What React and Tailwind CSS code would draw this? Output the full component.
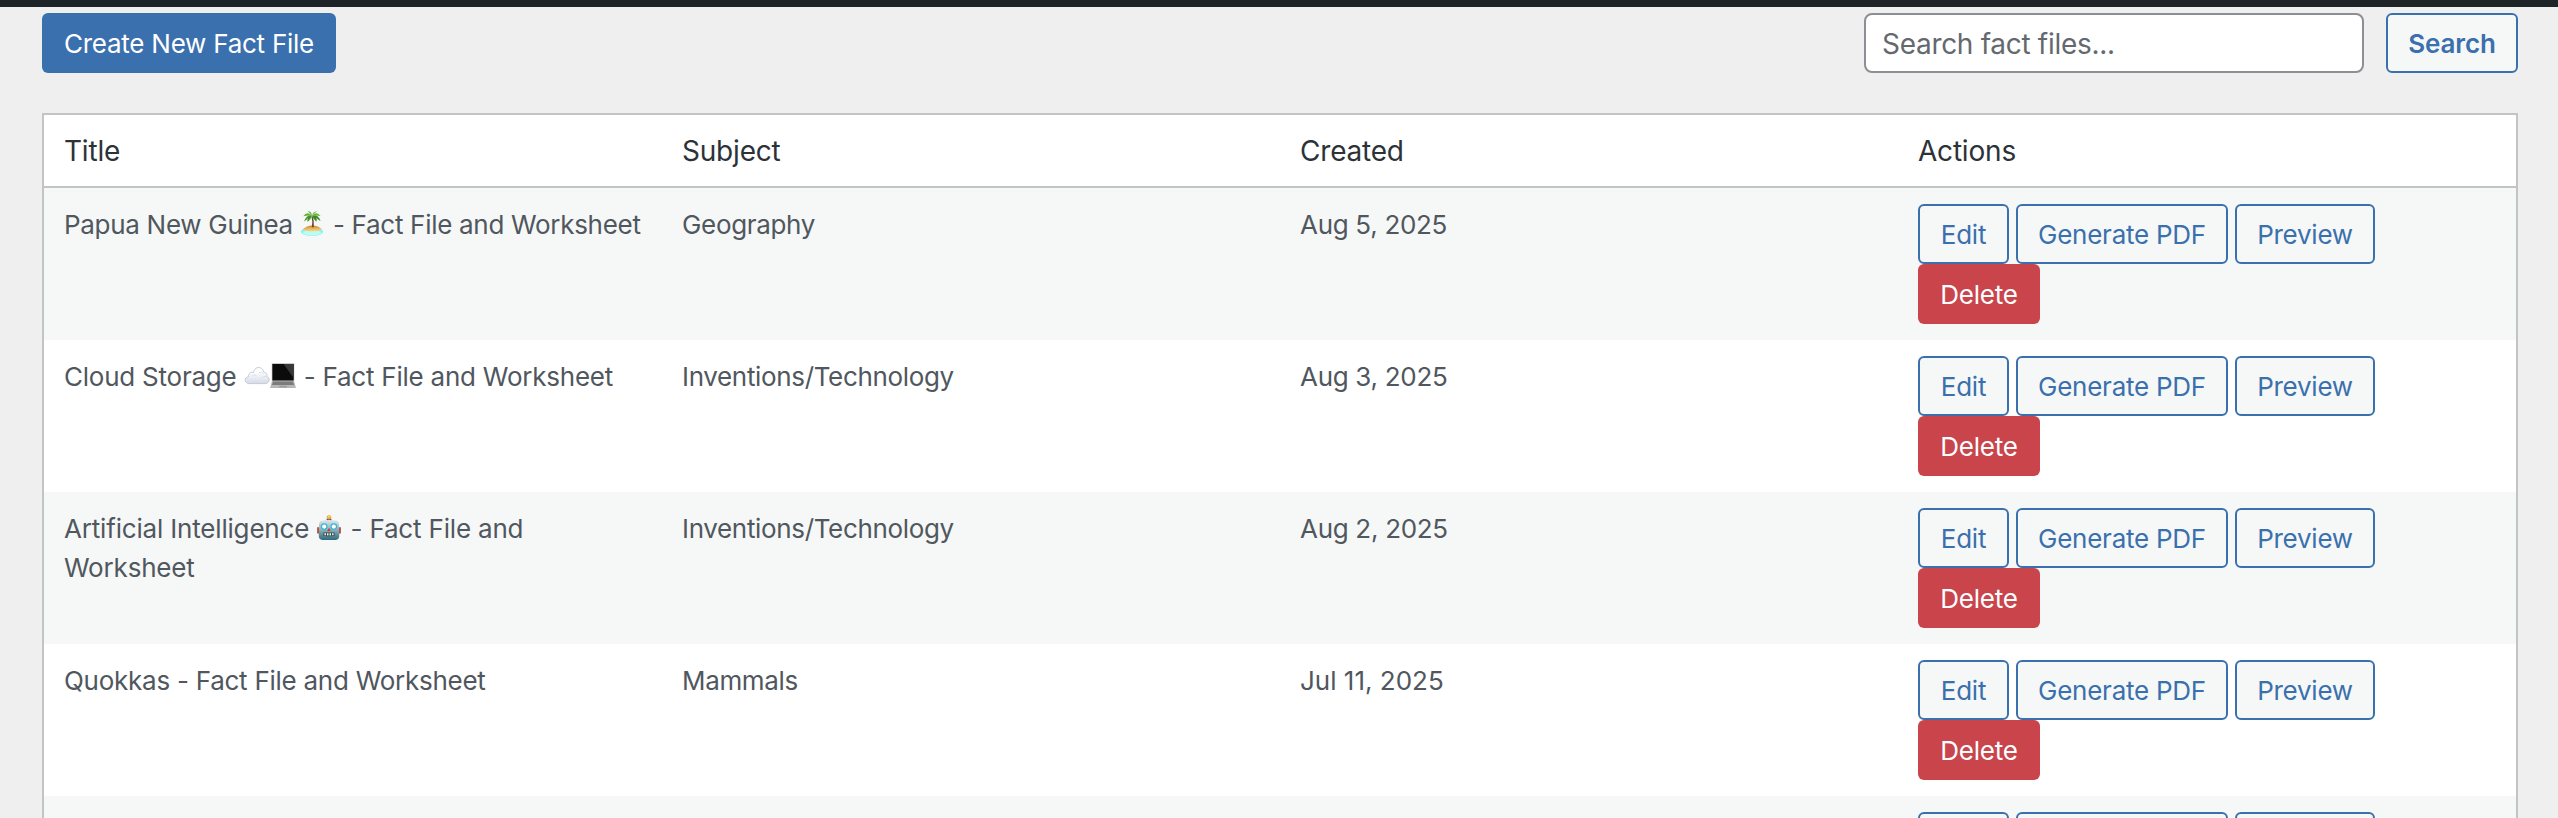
function Island() {
  return (
    <svg viewBox="0 0 26 28" className="-ml-px mr-px inline-block h-7 w-[26px] align-[-3px]">
      <defs>
        <linearGradient id="sand" x1="0" y1="0" x2="0" y2="1">
          <stop offset="0" stopColor="#c98a35" />
          <stop offset="1" stopColor="#ffdc85" />
        </linearGradient>
      </defs>
      <ellipse cx="13" cy="22.6" rx="11.2" ry="4.4" fill="#8cf3f0" />
      <ellipse cx="13" cy="23.8" rx="9" ry="2.6" fill="#bdfbf6" />
      <path d="M3.4 20.6Q7 16.6 13 16.4Q20 16.6 22.8 20.4Q19 22.6 15 22Q10 23.6 3.4 20.6Z" fill="url(#sand)" />
      <path d="M12.4 7.4Q14 12 12.7 18.2L14.8 18.2Q15.4 12 13.6 7.2Z" fill="#70422d" />
      <path d="M13 6.6Q8 5 5 12.4Q8 10.8 9 8.8Q8 11 8.6 13Q11.6 11 13 6.6Z" fill="#3f9424" />
      <path d="M13 6.8Q8.5 1.6 4.2 7.2Q9 6 13 6.8ZM13 6.6Q12.6 2.2 8.6 2.2Q11 4 13 6.6Z" fill="#5eae32" />
      <path d="M13 6.6Q19 4.6 21.6 12Q18.6 10.6 17.4 8.8Q18 11 17.4 12.8Q14.4 10.4 13 6.6Z" fill="#3a8a22" />
      <path d="M13 6.8Q17.5 1.8 21.6 7Q17 6 13 6.8ZM13 6.4Q14 2.2 18 2.4Q15 4 13 6.4Z" fill="#68b83a" />
    </svg>
  );
}

function Cloud() {
  return (
    <svg viewBox="0 0 26 28" className="inline-block h-7 w-[26px] align-[-3px]">
      <defs>
        <linearGradient id="cloud" x1="0" y1="0" x2="0" y2="1">
          <stop offset="0.3" stopColor="#fdfdfe" />
          <stop offset="1" stopColor="#d3dae7" />
        </linearGradient>
      </defs>
      <path d="M5.2 22.6C.2 22.4-.2 16.2 4.6 15.6C4.2 11.8 7.6 10.6 9.4 11.6C10.2 5 18.6 4.6 19.8 11.2C23 11.4 23.4 14 22.8 15.4C26.4 16.6 26 22 21.4 22.6Z" fill="url(#cloud)" stroke="#bfc6d3" strokeWidth="0.9" />
      <path d="M8.2 14.8Q10.4 12.8 12.6 15M15 11.6Q18 10.4 19.6 12.8M17.2 17.4Q20 14.2 22.6 15.8" fill="none" stroke="#d3d9e4" strokeWidth="0.8" />
    </svg>
  );
}

function Laptop() {
  return (
    <svg viewBox="0 0 26 28" className="mr-px inline-block h-7 w-[26px] align-[-3px]">
      <path d="M1.8 2.4H24.2V20H1.8Z" fill="#a9a9ab" />
      <path d="M2.4 3H23.6V19.4H2.4Z" fill="#0b0b0c" />
      <path d="M13.6 3H23.6V17Z" fill="#38383a" />
      <path d="M2 20H24L26 27H0Z" fill="#b7b7b9" />
      <path d="M3 20.4H23L24 24H2Z" fill="#7b7b7e" />
      <path d="M9.4 24.8H16.6L17 26.4H9Z" fill="#9c9c9f" />
    </svg>
  );
}

function Robot() {
  return (
    <svg viewBox="0 0 26 28" className="mr-px inline-block h-7 w-[26px] align-[-3px]">
      <defs>
        <linearGradient id="face" x1="0" y1="0" x2="0" y2="1">
          <stop offset="0" stopColor="#dbe9ea" />
          <stop offset="0.45" stopColor="#93b5be" />
          <stop offset="1" stopColor="#2f6b7c" />
        </linearGradient>
      </defs>
      <path d="M1.2 14.2H4V20.6H1.2ZM22 14.2H24.8V20.6H22Z" fill="#b9382e" />
      <path d="M10.6 5.6H15.4V8.4H10.6Z" fill="#6b4c8f" />
      <circle cx="13" cy="4.2" r="2.2" fill="#f0a92e" />
      <circle cx="13" cy="3.6" r="1" fill="#ffe07a" />
      <path d="M5 7.8Q13 6.2 21 7.8Q23.4 9 23.2 15V24Q22.6 26.8 20 27H6Q3.4 26.8 2.8 24V15Q2.6 9 5 7.8Z" fill="url(#face)" />
      <circle cx="8.2" cy="13.6" r="3.3" fill="#35b5da" />
      <circle cx="17.8" cy="13.6" r="3.3" fill="#35b5da" />
      <circle cx="8.2" cy="13.6" r="2.1" fill="#fff" />
      <circle cx="17.8" cy="13.6" r="2.1" fill="#fff" />
      <path d="M13 14.8L14.8 18H11.2Z" fill="#cf3d2c" />
      <path d="M7.4 19.6H18.6V22.8Q13 23.8 7.4 22.8Z" fill="#384950" />
      <path d="M8.4 20.2H10V22.2H8.4ZM11 20.2H12.5V22.5H11ZM13.5 20.2H15V22.5H13.5ZM16 20.2H17.6V22.2H16Z" fill="#e8eeef" />
    </svg>
  );
}

const rows = [
  { title: <>Papua New Guinea <Island /> - Fact File and Worksheet</>, subject: "Geography", created: "Aug 5, 2025", titleTracking: "tracking-[-0.3px]", dateTracking: "tracking-[-0.3px]" },
  { title: <>Cloud Storage <Cloud /><Laptop /> - Fact File and Worksheet</>, subject: "Inventions/Technology", created: "Aug 3, 2025", titleTracking: "tracking-[-0.23px]", dateTracking: "tracking-[-0.3px]" },
  { title: <>Artificial Intelligence <Robot /> - Fact File and Worksheet</>, subject: "Inventions/Technology", created: "Aug 2, 2025", titleTracking: "tracking-[-0.18px]", dateTracking: "tracking-[-0.3px]" },
  { title: <>Quokkas - Fact File and Worksheet</>, subject: "Mammals", created: "Jul 11, 2025", titleTracking: "tracking-[-0.26px]", dateTracking: "tracking-normal" },
];

const outline = "h-[60px] rounded-md border-2 border-[#3a70ad] bg-[#f6f8f7] text-[#3a70ad]";

function Actions({ labels = ["Edit", "Generate PDF", "Preview", "Delete"] }) {
  return (
    <div className="flex flex-wrap gap-x-[7px] tracking-[-0.25px]">
      <button className={`w-[91px] ${outline}`}>{labels[0]}</button>
      <button className={`w-[212px] ${outline}`}>{labels[1]}</button>
      <button className={`w-[140px] ${outline}`}>{labels[2]}</button>
      <button className="h-[60px] w-[122px] rounded-md bg-[#c9444b] text-white">{labels[3]}</button>
    </div>
  );
}

export default function App() {
  return (
    <div className="h-[818px] overflow-hidden bg-[#efefef] font-['Inter',sans-serif] text-[26px] leading-[39px]">
      <div className="h-[7px] bg-[#1d2327]" />
      <div className="flex justify-between pt-1.5 pr-10 pl-[42px]">
        <button className="h-[60px] w-[294px] rounded-md bg-[#3b70ae] tracking-[-0.25px] text-white">Create New Fact File</button>
        <div className="flex gap-[22px]">
          <input
            type="text"
            placeholder="Search fact files..."
            className="h-[60px] w-[500px] rounded-lg border-2 border-[#8c8f94] bg-white px-4 pt-0.5 text-[28px] tracking-[-0.3px] placeholder:text-[#646970]"
          />
          <button className={`w-[132px] font-semibold tracking-[-0.1px] ${outline}`}>Search</button>
        </div>
      </div>
      <div className="mt-10 mr-10 ml-[42px] border-2 border-[#c3c4c4] bg-white">
        <div className="grid h-[73px] grid-cols-4 items-center border-b-2 border-[#c3c4c4] pt-0.5 text-[28px] tracking-[-0.2px] text-[#2c3338]">
          {["Title", "Subject", "Created", "Actions"].map((h) => (
            <div key={h} className="px-5">{h}</div>
          ))}
        </div>
        {rows.map((r) => (
          <div key={r.created} className="grid h-[152px] grid-cols-4 py-4 tracking-[-0.34px] text-[#50575e] odd:bg-white even:bg-[#f6f8f7]">
            <div className={`pt-px pr-3 pl-5 ${r.titleTracking}`}>{r.title}</div>
            <div className="px-5 pt-px">{r.subject}</div>
            <div className={`px-5 pt-px ${r.dateTracking}`}>{r.created}</div>
            <div className="px-5"><Actions /></div>
          </div>
        ))}
        <div className="grid h-[152px] grid-cols-4 bg-[#f6f8f7] py-4">
          <div className="col-start-4 px-5"><Actions labels={[]} /></div>
        </div>
      </div>
    </div>
  );
}
